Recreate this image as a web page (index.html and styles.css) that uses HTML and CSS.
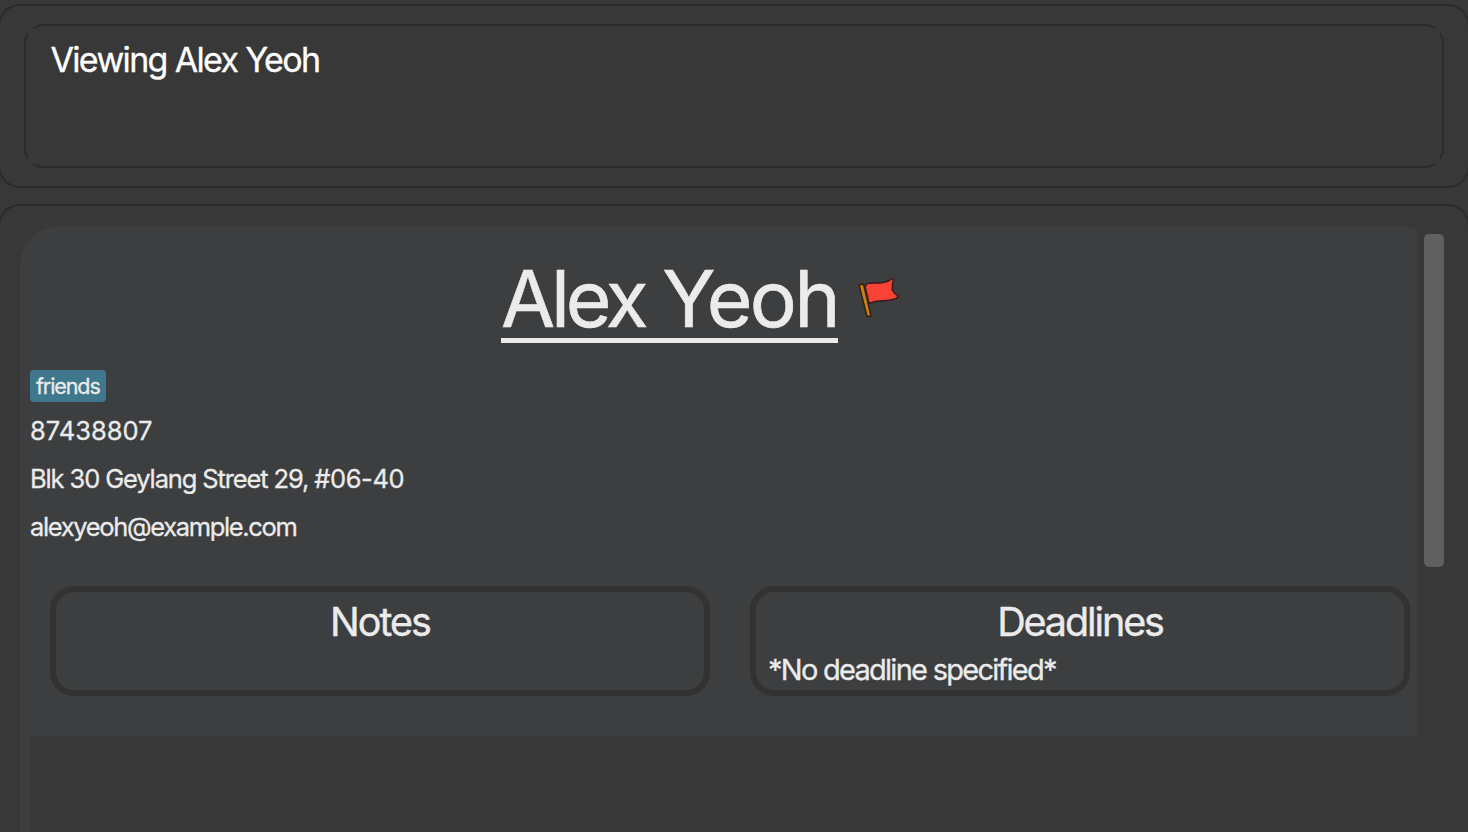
FILE: index.html
```html
<!DOCTYPE html>
<html lang="en">
<head>
<meta charset="utf-8">
<title>Alex Yeoh</title>
<link rel="stylesheet" href="styles.css">
</head>
<body>
<main class="app">
  <section class="panel panel-status">
    <div class="status-frame"><div class="status-text"><span>Viewing Alex Yeoh</span></div></div>
  </section>
  <section class="panel panel-person">
    <div class="viewport">
      <article class="profile">
        <header class="heading">
          <h1 class="name"><span class="name-text"><span class="first">Alex</span> Yeoh</span></h1>
          <svg class="flag" viewBox="0 0 44 44" aria-hidden="true">
            <path d="M13 9.500C21 8 26 10 31 8Q35 7.500 38 4.500L39.500 5.500Q38 10 38.300 16Q40 19.500 44 21.500Q44 24.500 39 25.500C31 28 25 25 15 29.500Q13 20 11 13Z" fill="#f94335" stroke="#351b1c" stroke-width="1.500" stroke-linejoin="round"/>
            <path d="M5 10.700L9.500 10.200L17 42L13 42.500Z" fill="#ce810b" stroke="#2e2214" stroke-width="1.500" stroke-linejoin="round"/>
          </svg>
        </header>
        <div class="tags"><span class="tag">friends</span></div>
        <div class="detail phone">87438807</div>
        <div class="detail address">Blk 30 Geylang Street 29, <span class="unit">#06-40</span></div>
        <div class="detail email">alexyeoh@example.com</div>
        <div class="cards">
          <section class="card"><h2 class="card-title notes">Notes</h2></section>
          <section class="card"><h2 class="card-title deadlines">Deadlines</h2><p class="card-text">*No deadline specified*</p></section>
        </div>
        <div class="remainder"></div>
      </article>
    </div>
    <div class="scroll-track"><div class="scroll-thumb"></div></div>
  </section>
</main>
</body>
</html>
```
FILE: styles.css
```css
* { box-sizing: border-box; }
body { margin: 0; background: #383838; color: #ebebeb; font-family: Inter, "Liberation Sans", sans-serif; -webkit-text-stroke: 0.300px; overflow: hidden; }
h1, h2, p { margin: 0; font-weight: 400; }
.app { height: 832px; padding-top: 4px; display: flex; flex-direction: column; gap: 16px; overflow: hidden; }
.panel { border: 2px solid #2b2b2b; border-radius: 22px; margin: 0 -2px; flex: none; }
.panel-status { height: 184px; padding: 18px 24px; }
.status-frame { height: 144px; border: 2px solid #2b2b2b; border-radius: 20px; display: flex; }
.status-text { flex: 1; margin: 2px; padding: 10px 22.500px; background: #383838; color: #fff; font-size: 34px; line-height: 44px; letter-spacing: -1.660px; }
.panel-person { height: 700px; padding: 20px 0 0 20px; display: flex; }
.viewport { width: 1398px; overflow: hidden; flex: none; }
.profile { width: 1420px; height: 680px; background: #3c3e3f; border-radius: 40px 40px 0 0; padding-left: 10px; }
.heading { height: 144px; width: 1339px; padding-top: 26px; display: flex; justify-content: center; gap: 16px; }
.name { font-size: 78.500px; line-height: 93px; letter-spacing: -2.700px; word-spacing: -1.500px; -webkit-text-stroke-width: 0.600px; }
.name-text { display: block; height: 91px; border-bottom: 5px solid #ebebeb; white-space: nowrap; }
.first { letter-spacing: -4.200px; }
.flag { width: 44px; height: 44px; margin-top: 22px; overflow: visible; }
.tags { height: 37px; }
.tag { display: inline-block; height: 32px; padding: 0 6px; background: #3f778c; border-radius: 4px; font-size: 21.500px; line-height: 32px; letter-spacing: -1.100px; }
.detail { height: 48px; font-size: 25.500px; line-height: 48px; }
.address { letter-spacing: -1.130px; }
.unit { letter-spacing: -0.400px; }
.email { letter-spacing: -1.350px; }
.cards { margin-top: 35px; padding-left: 20px; display: flex; gap: 40px; }
.card { width: 660px; height: 110px; border: 6px solid #323232; border-radius: 24px; padding: 6px 12px; }
.card-title { text-align: center; font-size: 39.500px; line-height: 48px; -webkit-text-stroke-width: 0.400px; }
.notes { letter-spacing: -2px; }
.deadlines { letter-spacing: -2.100px; }
.card-text { font-size: 29px; line-height: 48px; letter-spacing: -1.730px; }
.remainder { margin-top: 40px; height: 160px; background: #383838; }
.scroll-track { width: 20px; margin-left: 6px; padding-top: 8px; }
.scroll-thumb { height: 333px; border-radius: 5px; background: #606060; }
```
